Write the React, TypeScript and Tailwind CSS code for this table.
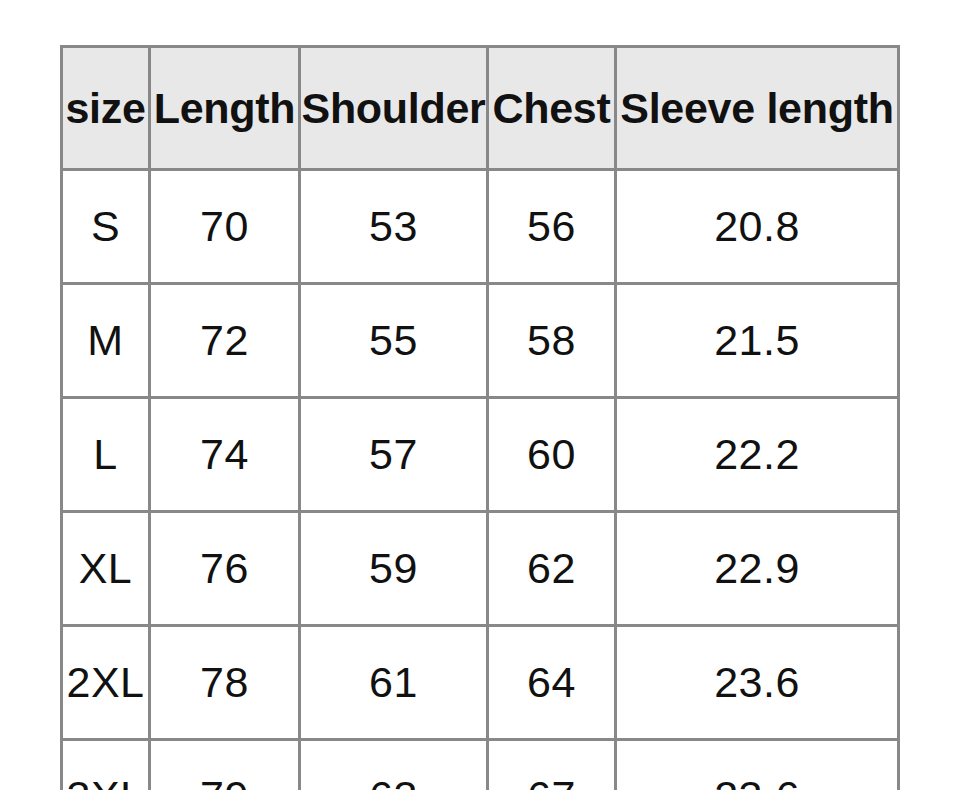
import React from "react";

const header = ["size", "Length", "Shoulder", "Chest", "Sleeve length"];
const rows = [
  ["S", "70", "53", "56", "20.8"],
  ["M", "72", "55", "58", "21.5"],
  ["L", "74", "57", "60", "22.2"],
  ["XL", "76", "59", "62", "22.9"],
  ["2XL", "78", "61", "64", "23.6"],
  ["3XL", "79", "63", "67", "23.6"],
];

export default function App() {
  return (
    <div className="min-h-screen bg-white pt-[45px] pl-[60px]" style={{ fontFamily: '"Liberation Sans", Arial, sans-serif' }}>
      <div className="inline-grid grid-cols-[85px_147px_185px_125px_280px] gap-[3px] bg-[#888888] p-[3px] text-[#111111]">
        {header.map((h) => (
          <div key={h} className="flex h-[120px] items-center justify-center whitespace-nowrap bg-[#e8e8e8] text-[43px] font-bold tracking-[-0.3px]">
            {h}
          </div>
        ))}
        {rows.map((r, i) =>
          r.map((c, j) => (
            <div key={`${i}-${j}`} className="flex h-[111px] items-center justify-center whitespace-nowrap bg-white text-[43px] font-normal tracking-[0.5px]">
              {c}
            </div>
          ))
        )}
      </div>
    </div>
  );
}
